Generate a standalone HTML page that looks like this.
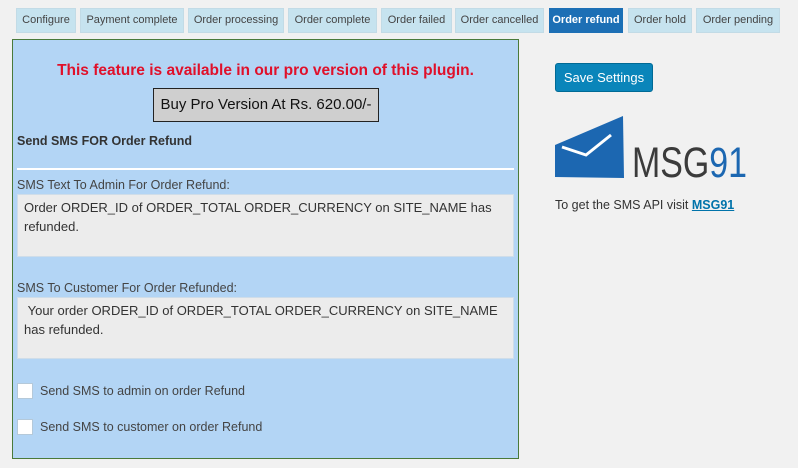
<!DOCTYPE html>
<html><head><meta charset="utf-8"><style>
*{box-sizing:border-box;margin:0;padding:0}
body{width:798px;height:468px;background:#f1f1f1;font-family:"Liberation Sans",sans-serif;position:relative;overflow:hidden;color:#333}
.a{position:absolute;white-space:nowrap}
.tab{position:absolute;top:8px;height:25px;background:#c6e3ef;border:1px solid #c2dbe6;font-size:11px;color:#444;line-height:23px;text-align:center}
.tab.on{background:#1c6fb5;color:#fff;font-weight:bold;border-color:#1c6fb5}
.panel{position:absolute;left:12px;top:39px;width:507px;height:420px;background:#b3d5f5;border:1px solid #4a7a3a}
.ta{position:absolute;left:17px;width:497px;background:#ececec;border:1px solid #cfdde9;font-size:13px;line-height:19px;padding:3px 6px;color:#333;white-space:normal}
.cb{position:absolute;left:17px;width:16px;height:16px;background:#fff;border:1px solid #b5c9d9}
</style></head><body>
<div class="tab" style="left:16px;width:60px">Configure</div>
<div class="tab" style="left:80px;width:104px">Payment complete</div>
<div class="tab" style="left:188px;width:96px">Order processing</div>
<div class="tab" style="left:288px;width:89px">Order complete</div>
<div class="tab" style="left:381px;width:71px">Order failed</div>
<div class="tab" style="left:455px;width:89px">Order cancelled</div>
<div class="tab on" style="left:549px;width:74px">Order refund</div>
<div class="tab" style="left:628px;width:64px">Order hold</div>
<div class="tab" style="left:696px;width:84px">Order pending</div>

<div class="panel"></div>
<div class="a" style="left:12px;width:507px;text-align:center;top:62px;color:#e0102a;font-size:15.5px;font-weight:bold">This feature is available in our pro version of this plugin.</div>
<div class="a" style="left:153px;top:88px;width:226px;height:34px;background:#cfcfcf;border:1px solid #222;font-size:15px;line-height:32px;text-align:center;color:#111">Buy Pro Version At Rs. 620.00/-</div>
<div class="a" style="left:17px;top:134px;font-size:12.5px;font-weight:bold;color:#333">Send SMS FOR Order Refund</div>
<div class="a" style="left:17px;top:168px;width:497px;height:2px;background:#fff"></div>
<div class="a" style="left:17px;top:178px;font-size:12.5px;color:#444">SMS Text To Admin For Order Refund:</div>
<div class="ta" style="top:194px;height:63px">Order ORDER_ID of ORDER_TOTAL ORDER_CURRENCY on SITE_NAME has refunded.</div>
<div class="a" style="left:17px;top:281px;font-size:12.5px;color:#444">SMS To Customer For Order Refunded:</div>
<div class="ta" style="top:297px;height:62px">&nbsp;Your order ORDER_ID of ORDER_TOTAL ORDER_CURRENCY on SITE_NAME has refunded.</div>
<div class="cb" style="top:383px"></div>
<div class="a" style="left:40px;top:384px;font-size:12.5px;color:#444">Send SMS to admin on order Refund</div>
<div class="cb" style="top:419px"></div>
<div class="a" style="left:40px;top:420px;font-size:12.5px;color:#444">Send SMS to customer on order Refund</div>

<div class="a" style="left:555px;top:63px;width:98px;height:29px;background:#0a85ba;border:1px solid #006a95;border-radius:3px;color:#fff;font-size:13px;line-height:27px;text-align:center">Save Settings</div>
<svg class="a" style="left:555px;top:114px" width="200" height="66" viewBox="0 0 200 66">
<polygon points="0,31 68,2 69,64 0,63" fill="#1c67b1"/>
<polyline points="7,33 31,41 56,21" fill="none" stroke="#fff" stroke-width="3"/>
<text x="77" y="63" font-family="Liberation Sans,sans-serif" font-size="43" fill="#3b3b3b" textLength="115" lengthAdjust="spacingAndGlyphs">MSG<tspan fill="#1c67b1">91</tspan></text>
</svg>
<div class="a" style="left:555px;top:198px;font-size:12.5px;color:#333">To get the SMS API visit <span style="color:#0073aa;text-decoration:underline;font-weight:bold">MSG91</span></div>
</body></html>
